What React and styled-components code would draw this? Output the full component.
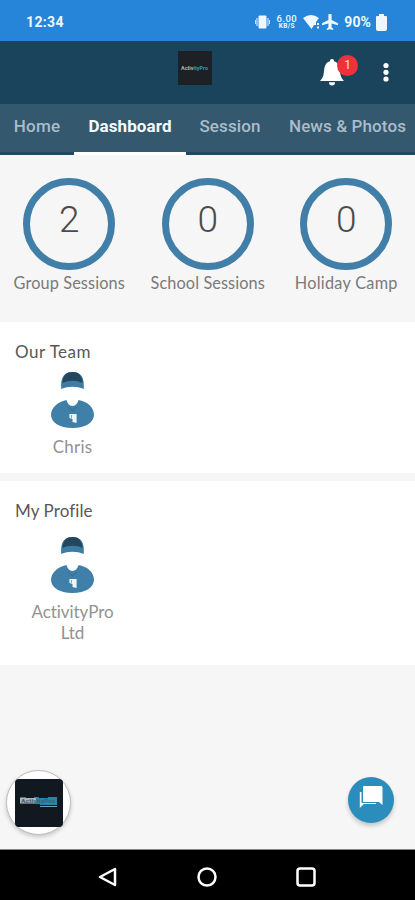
import React from "react";
import styled, { createGlobalStyle } from "styled-components";

const Global = createGlobalStyle`
  * { box-sizing: border-box; }
  body { margin: 0; background: #f6f6f6; font-family: Lato, "Open Sans", sans-serif; font-variant-ligatures: none; }
  svg { display: block; flex: none; }
`;

const Screen = styled.div`
  width: 415px;
  height: 900px;
  display: flex;
  flex-direction: column;
  position: relative;
  overflow: hidden;
  background: #f6f6f6;
`;

const StatusBar = styled.div`
  height: 41px;
  flex: none;
  display: flex;
  align-items: center;
  justify-content: space-between;
  padding: 3px 28px 0 26px;
  background: #2685d8;
  color: #eef7ff;
  font: 700 14px/20px Roboto, sans-serif;
`;

const Clock = styled.span`
  letter-spacing: 0.35px;
`;

const StatusIcons = styled.div`
  display: flex;
  align-items: center;
`;

const Speed = styled.div`
  width: 21px;
  margin: 0 6px 0 6px;
  display: flex;
  flex-direction: column;
  align-items: center;
  font: 500 9.5px/9px Roboto, sans-serif;
  letter-spacing: 0.4px;
`;

const SpeedValue = styled.span`
  height: 9px;
  line-height: 9px;
`;

const SpeedUnit = styled.span`
  font-size: 6.5px;
  line-height: 7px;
  font-weight: 700;
`;

const Battery = styled.span`
  margin: 0 5px 0 4px;
  letter-spacing: 0.1px;
`;

const Header = styled.header`
  height: 63px;
  flex: none;
  display: grid;
  grid-template-columns: 178px 34px 1fr;
  background: #1a445b;
`;

const BrandTile = styled.div`
  margin-top: 10px;
  grid-column: 2;
  width: 34px;
  height: 34px;
  background: #1d2126;
`;

const Actions = styled.div`
  display: flex;
  justify-content: flex-end;
  align-items: flex-start;
  padding: 17px 24px 0 0;
`;

const BellButton = styled.div`
  position: relative;
  width: 24px;
  height: 30px;
  margin-right: 37px;
`;

const Badge = styled.span`
  position: absolute;
  left: 17px;
  top: -3px;
  width: 21px;
  height: 21px;
  border-radius: 50%;
  background: #ef3239;
  color: #ffdfe0;
  text-align: center;
  font: 400 12px/20px Roboto, sans-serif;
`;

const Tabs = styled.nav`
  height: 51px;
  flex: none;
  display: flex;
  background: #34586e;
  border-bottom: 1px solid #1f4a62;
`;

const Tab = styled.div`
  width: ${(p) => p.$width}px;
  flex: none;
  height: 51px;
  padding-top: 11px;
  text-align: center;
  white-space: nowrap;
  font: ${(p) => (p.$active ? 700 : 500)} 17px/22px Roboto, sans-serif;
  letter-spacing: ${(p) => p.$spacing}px;
  color: ${(p) => (p.$active ? "#f4fafd" : "#a9bdca")};
  border-bottom: 3px solid ${(p) => (p.$active ? "#fff" : "#1f4a62")};
`;

const Stats = styled.section`
  height: 167px;
  flex: none;
  display: grid;
  grid-template-columns: repeat(3, 138.5px);
  padding-top: 23px;
`;

const Stat = styled.div`
  display: flex;
  flex-direction: column;
  align-items: center;
`;

const Ring = styled.div`
  width: 92px;
  height: 92px;
  border: 7px solid #417fa8;
  border-radius: 50%;
  text-align: center;
  color: #4b4b4b;
  font: 300 37px/70px Roboto, sans-serif;
`;

const StatLabel = styled.div`
  color: #7a7a7a;
  font-size: 16.3px;
  line-height: 25px;
  white-space: nowrap;
  letter-spacing: ${(p) => p.$spacing}px;
`;

const Card = styled.section`
  height: ${(p) => p.$height}px;
  flex: none;
  padding: 19px 15px 0;
  margin-bottom: 8px;
  background: #fff;
`;

const CardTitle = styled.h2`
  margin: 0;
  font-weight: 400;
  font-size: 17px;
  line-height: 22px;
  letter-spacing: ${(p) => p.$spacing}px;
  color: #585858;
`;

const Person = styled.div`
  width: 115px;
  display: flex;
  flex-direction: column;
  align-items: center;
  margin-top: ${(p) => p.$offset}px;
`;

const PersonName = styled.div`
  margin-top: 8px;
  width: 90px;
  text-align: center;
  color: #929292;
  font-size: 17px;
  line-height: 21px;
  letter-spacing: ${(p) => p.$spacing}px;
`;

const Floating = styled.div`
  margin-top: auto;
  height: 88px;
  flex: none;
  padding: 9px 21px 0 6px;
  display: flex;
  justify-content: space-between;
  align-items: flex-start;
`;

const BrandButton = styled.div`
  width: 65px;
  height: 65px;
  border: 1px solid #bebebe;
  border-radius: 50%;
  background: #fff;
  display: grid;
  place-items: center;
  box-shadow: 0 2px 4px #0003;
`;

const BrandMark = styled.div`
  width: 48px;
  height: 48px;
  border-radius: 4px;
  background: #111820;
`;

const ChatButton = styled.div`
  width: 46px;
  height: 46px;
  margin-top: 7px;
  padding: 9px 0 0 11px;
  border-radius: 50%;
  background: #2a8dbb;
  box-shadow: 0 3px 4px #0003;
`;

const NavBar = styled.footer`
  height: 51px;
  flex: none;
  display: flex;
  align-items: center;
  justify-content: space-between;
  padding: 3px 99px 0 97px;
  background: #000;
  border-top: 1px solid #858585;
`;

const Logo = () => (
  <svg width="34" height="34" viewBox="0 0 34 34">
    <text x="3" y="18.6" fill="#a7b8c1" fontFamily="Roboto, sans-serif" fontWeight="700" fontSize="6" textLength="27" lengthAdjust="spacingAndGlyphs">
      Activ<tspan fill="#3994bb">ityPro</tspan>
    </text>
  </svg>
);

const FullLogo = () => (
  <svg width="48" height="48" viewBox="0 0 48 48">
    <path d="M5 19h37v7H25v-1H5z" fill="#2485b1" />
    <path d="M5 19h16v5H5z" fill="#a8b5bb" />
    <path d="M5 18h6v1H5zM19 18h5v1h-5zM33 18h9v1h-9z" fill="#57717d" />
    <path d="M25 27h17v1H25z" fill="#8199a5" />
    <text x="6" y="24" fill="#42606f" fontFamily="Roboto, sans-serif" fontSize="5.2" fontWeight="700" textLength="34" lengthAdjust="spacingAndGlyphs">ActivityPro</text>
  </svg>
);

const CoachIcon = () => (
  <svg width="45" height="57" viewBox="0 0 44 57" preserveAspectRatio="none">
    <path d="M11 18C10 6 14 1 22 1s12 5 11 17c-7-3-15-3-22 0z" fill="#3d7ca5" />
    <path d="M12 12C13 4 16 1 22 1s9 3 10 11c-6-3-14-3-20 0z" fill="#24475f" />
    <path d="M16 29c1 3 3 6 6 6s5-3 6-6c10 2 15 8 15 15 0 7-8 13-21 13S1 51 1 44c0-7 6-13 15-15z" fill="#407fa8" />
    <path d="M18 36l4 4 4-4" fill="none" stroke="#356f94" />
    <path d="M19 43h7v9l-4-1v-3l-3-1z" fill="#edf5f9" />
    <path d="M21 44v3" stroke="#83a9c1" />
  </svg>
);

const stats = [
  { value: 2, label: "Group Sessions", spacing: 0.12 },
  { value: 0, label: "School Sessions", spacing: 0.1 },
  { value: 0, label: "Holiday Camp", spacing: 0.25 },
];

export default function App() {
  return (
    <Screen>
      <Global />
      <StatusBar>
        <Clock>12:34</Clock>
        <StatusIcons>
          <svg width="15" height="16" viewBox="0 0 15 16" fill="currentColor">
            <rect x="3.5" y="1.5" width="8" height="13" rx="1" />
            <path d="M1.5 4h1v8h-1zM12.5 4h1v8h-1zM0 6h.8v4H0zM14.2 6h.8v4h-.8z" />
          </svg>
          <Speed><SpeedValue>6.00</SpeedValue><SpeedUnit>KB/S</SpeedUnit></Speed>
          <svg width="17" height="16" viewBox="0 0 17 16" fill="currentColor">
            <path d="M0 4Q8 -2 16 4L13 8v3h-2L8.5 15z" />
            <path d="M14 9h2v2h-2zM14 12.5h2v2h-2z" />
          </svg>
          <svg width="20" height="16" viewBox="-.5 2 25 20" fill="currentColor">
            <path d="M22 16v-2.500l-8-4V3.500a2 2 0 0 0-4 0v6l-8 4V16l8-2v4.500L8 20.500V22l4-1 4 1v-1.500l-2-2V14z" />
          </svg>
          <Battery>90%</Battery>
          <svg width="11" height="17" viewBox="0 0 11 17" fill="currentColor"><path d="M3 0h5v2h2q1 0 1 1v12q0 2-2 2H2q-2 0-2-2V3q0-1 1-1h2z" /></svg>
        </StatusIcons>
      </StatusBar>
      <Header>
        <BrandTile><Logo /></BrandTile>
        <Actions>
          <BellButton>
            <svg width="24" height="28" viewBox="0 0 24 28" fill="#fff">
              <path d="M12 1c1.500 0 2 .8 2 2.300 4.200 1.200 5.500 4.700 6 9.700.4 5 1.500 7.500 4 10H0c2.500-2.500 3.600-5 4-10 .5-5 1.800-8.500 6-9.700C10 1.800 10.500 1 12 1z" />
              <path d="M9 24.300h6q0 3.200-3 3.200t-3-3.200z" />
            </svg>
            <Badge>1</Badge>
          </BellButton>
          <svg width="10" height="30" viewBox="0 0 10 30" fill="#fff">
            <circle cx="5" cy="7.500" r="2.600" /><circle cx="5" cy="14.300" r="2.600" /><circle cx="5" cy="21" r="2.600" />
          </svg>
        </Actions>
      </Header>
      <Tabs>
        <Tab $width={74} $spacing={0.25}>Home</Tab>
        <Tab $width={112} $active $spacing={0.1}>Dashboard</Tab>
        <Tab $width={88} $spacing={0.1}>Session</Tab>
        <Tab $width={147} $spacing={0.1}>News &amp; Photos</Tab>
      </Tabs>
      <Stats>
        {stats.map((s) => (
          <Stat key={s.label}><Ring>{s.value}</Ring><StatLabel $spacing={s.spacing}>{s.label}</StatLabel></Stat>
        ))}
      </Stats>
      <Card $height={151}>
        <CardTitle $spacing={0.5}>Our Team</CardTitle>
        <Person $offset={8}><CoachIcon /><PersonName $spacing={0.2}>Chris</PersonName></Person>
      </Card>
      <Card $height={184}>
        <CardTitle $spacing={0.1}>My Profile</CardTitle>
        <Person $offset={14}><CoachIcon /><PersonName $spacing={-0.05}>ActivityPro Ltd</PersonName></Person>
      </Card>
      <Floating>
        <BrandButton><BrandMark><FullLogo /></BrandMark></BrandButton>
        <ChatButton>
          <svg width="25" height="24" viewBox="0 0 25 24" fill="#fff">
            <path d="M5 0h17q1.500 0 1.500 1.500V19l-3.500-3H5q-1 0-1-1V1q0-1 1-1z" />
            <path d="M2.500 6H.800V22l4-4H17v-1H3.500q-1 0-1-1z" />
          </svg>
        </ChatButton>
      </Floating>
      <NavBar>
        <svg width="21" height="22" viewBox="0 0 21 22"><path d="M18 3v16L3 11z" fill="none" stroke="#fff" strokeWidth="2.500" strokeLinejoin="round" /></svg>
        <svg width="22" height="22" viewBox="0 0 22 22"><circle cx="11" cy="11" r="8.500" fill="none" stroke="#fff" strokeWidth="2.500" /></svg>
        <svg width="21" height="22" viewBox="0 0 21 22"><rect x="2.500" y="2.500" width="17" height="17" rx="2.500" fill="none" stroke="#fff" strokeWidth="2.500" /></svg>
      </NavBar>
    </Screen>
  );
}
